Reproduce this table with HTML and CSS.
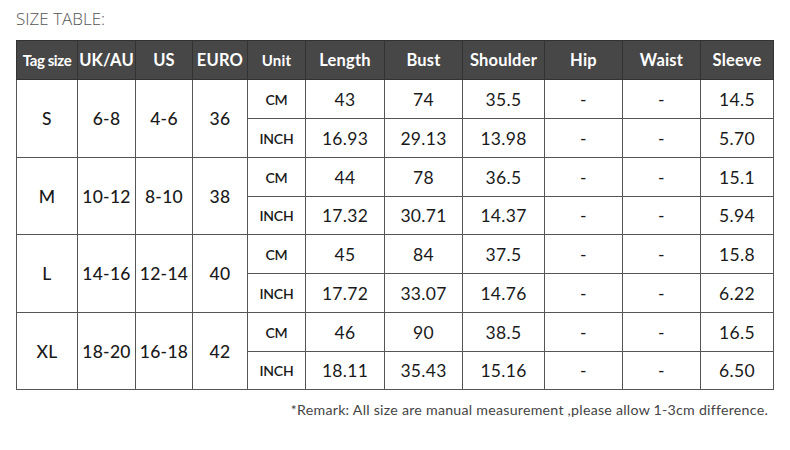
FILE: index.html
```html
<!DOCTYPE html>
<html>
<head>
<meta charset="utf-8">
<link rel="stylesheet" href="styles.css">
</head>
<body>
<div class="page">
  <div class="title">SIZE TABLE:</div>
  <table class="size-table">
    <colgroup>
      <col style="width:61px"><col style="width:58px"><col style="width:57px"><col style="width:55px">
      <col style="width:58px"><col style="width:79px"><col style="width:78px"><col style="width:82px">
      <col style="width:78px"><col style="width:78px"><col style="width:73px">
    </colgroup>
    <thead>
      <tr class="head">
        <th class="tag">Tag size</th><th>UK/AU</th><th>US</th><th>EURO</th><th class="unit-h">Unit</th>
        <th>Length</th><th>Bust</th><th>Shoulder</th><th>Hip</th><th>Waist</th><th>Sleeve</th>
      </tr>
    </thead>
    <tbody>
      <tr class="r39"><td rowspan="2" class="sz">S</td><td rowspan="2">6-8</td><td rowspan="2">4-6</td><td rowspan="2">36</td><td class="unit">CM</td><td>43</td><td>74</td><td>35.5</td><td>-</td><td>-</td><td>14.5</td></tr>
      <tr class="r39"><td class="unit">INCH</td><td>16.93</td><td>29.13</td><td>13.98</td><td>-</td><td>-</td><td>5.70</td></tr>
      <tr class="r39"><td rowspan="2" class="sz">M</td><td rowspan="2">10-12</td><td rowspan="2">8-10</td><td rowspan="2">38</td><td class="unit">CM</td><td>44</td><td>78</td><td>36.5</td><td>-</td><td>-</td><td>15.1</td></tr>
      <tr class="r38"><td class="unit">INCH</td><td>17.32</td><td>30.71</td><td>14.37</td><td>-</td><td>-</td><td>5.94</td></tr>
      <tr class="r39"><td rowspan="2" class="sz">L</td><td rowspan="2">14-16</td><td rowspan="2">12-14</td><td rowspan="2">40</td><td class="unit">CM</td><td>45</td><td>84</td><td>37.5</td><td>-</td><td>-</td><td>15.8</td></tr>
      <tr class="r39"><td class="unit">INCH</td><td>17.72</td><td>33.07</td><td>14.76</td><td>-</td><td>-</td><td>6.22</td></tr>
      <tr class="r39"><td rowspan="2" class="sz">XL</td><td rowspan="2">18-20</td><td rowspan="2">16-18</td><td rowspan="2">42</td><td class="unit">CM</td><td>46</td><td>90</td><td>38.5</td><td>-</td><td>-</td><td>16.5</td></tr>
      <tr class="r38"><td class="unit">INCH</td><td>18.11</td><td>35.43</td><td>15.16</td><td>-</td><td>-</td><td>6.50</td></tr>
    </tbody>
  </table>
  <div class="remark">*Remark: All size are manual measurement ,please allow 1-3cm difference.</div>
</div>
</body>
</html>
```

FILE: styles.css
```css
html, body {
  margin: 0;
  padding: 0;
  background: #ffffff;
}

.page {
  padding: 8px 16px 0 16px;
  width: 790px;
  box-sizing: border-box;
}

.title {
  font-family: "Open Sans", sans-serif;
  font-weight: 300;
  font-size: 17px;
  line-height: 22px;
  color: #555555;
  height: 32px;
  letter-spacing: 0;
}

.size-table {
  border-collapse: collapse;
  table-layout: fixed;
  width: 758px;
  font-family: "Lato", sans-serif;
  color: #1a1a1a;
}

.size-table th,
.size-table td {
  border: 1px solid #555555;
  padding: 0;
  text-align: center;
  vertical-align: middle;
}

.head {
  height: 39px;
  background: #474747;
}

.head th {
  color: #ffffff;
  font-weight: 700;
  font-size: 16.5px;
  letter-spacing: 0.2px;
  border-color: #333333;
}

.head th.tag {
  font-size: 15px;
  letter-spacing: -0.4px;
}

.head th.unit-h {
  font-size: 15px;
}

.r39 { height: 39px; }
.r38 { height: 38px; }

.size-table td {
  font-size: 17.5px;
  font-weight: 400;
  letter-spacing: 0.3px;
}

.size-table td.sz,
.size-table td[rowspan] {
  font-weight: 500;
}

.size-table td.unit {
  font-size: 14px;
  font-weight: 600;
  letter-spacing: -0.2px;
}

.remark {
  font-family: "Lato", sans-serif;
  font-size: 14.2px;
  color: #444444;
  text-align: right;
  padding-right: 6px;
  box-sizing: border-box;
  width: 758px;
  margin-top: 11px;
  letter-spacing: 0.25px;
}
```
